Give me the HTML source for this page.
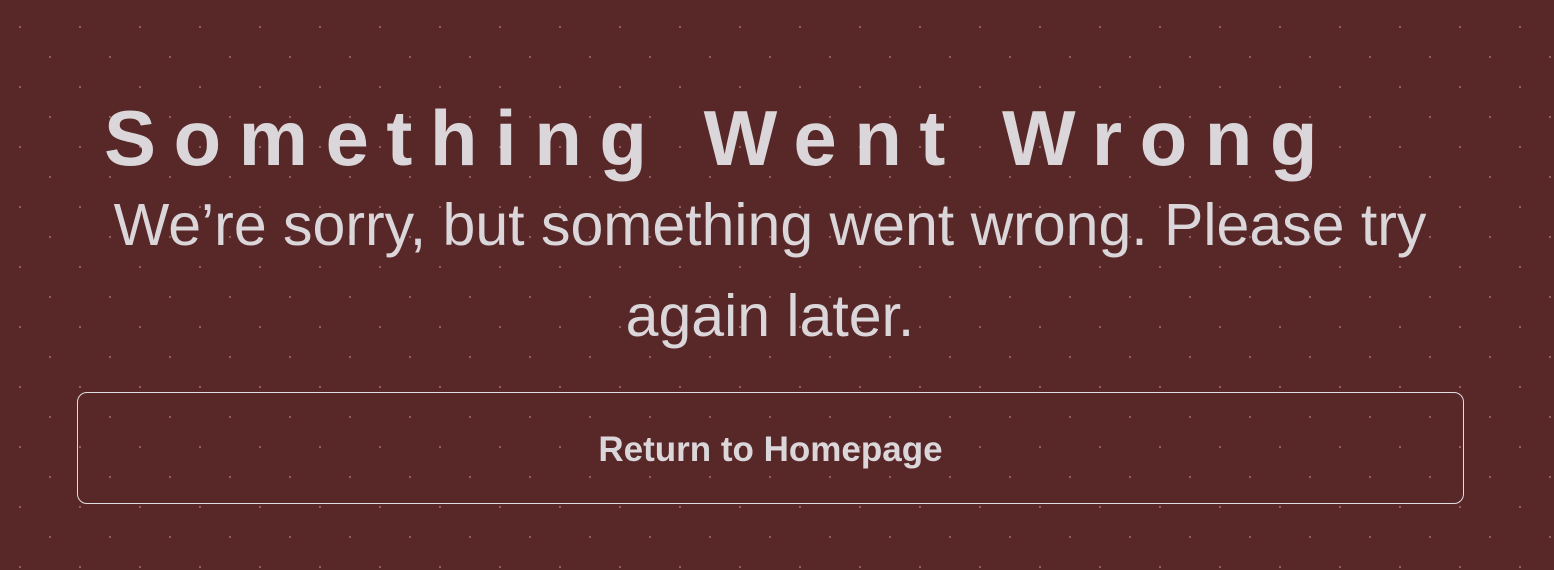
<!DOCTYPE html>
<html><head><meta charset="utf-8"><style>
html,body{margin:0;padding:0;}
body{width:1554px;height:570px;overflow:hidden;position:relative;background-color:#582829;
background-image:radial-gradient(circle,#9c6266 0.9px,transparent 1.3px),radial-gradient(circle,#9c6266 0.9px,transparent 1.3px);
background-size:60px 60px,60px 60px;background-position:-10px -3px,20px 27px;
font-family:"Liberation Sans",sans-serif;color:#dad6d9;}
h1{position:absolute;left:104px;top:83px;margin:0;font-size:78px;font-weight:bold;letter-spacing:17.5px;white-space:nowrap;line-height:110px;}
p{position:absolute;left:0;width:1540px;top:180px;margin:0;text-align:center;font-size:59px;line-height:91px;white-space:nowrap;}
.btn{position:absolute;left:77px;top:392px;width:1387px;height:112px;border:1.5px solid #e0dcdf;border-radius:10px;box-sizing:border-box;display:flex;align-items:center;justify-content:center;font-weight:bold;font-size:35px;padding-top:3px;}
</style></head><body>
<h1>Something Went Wrong</h1>
<p>We’re sorry, but something went wrong. Please try<br>again later.</p>
<div class="btn">Return to Homepage</div>
</body></html>
